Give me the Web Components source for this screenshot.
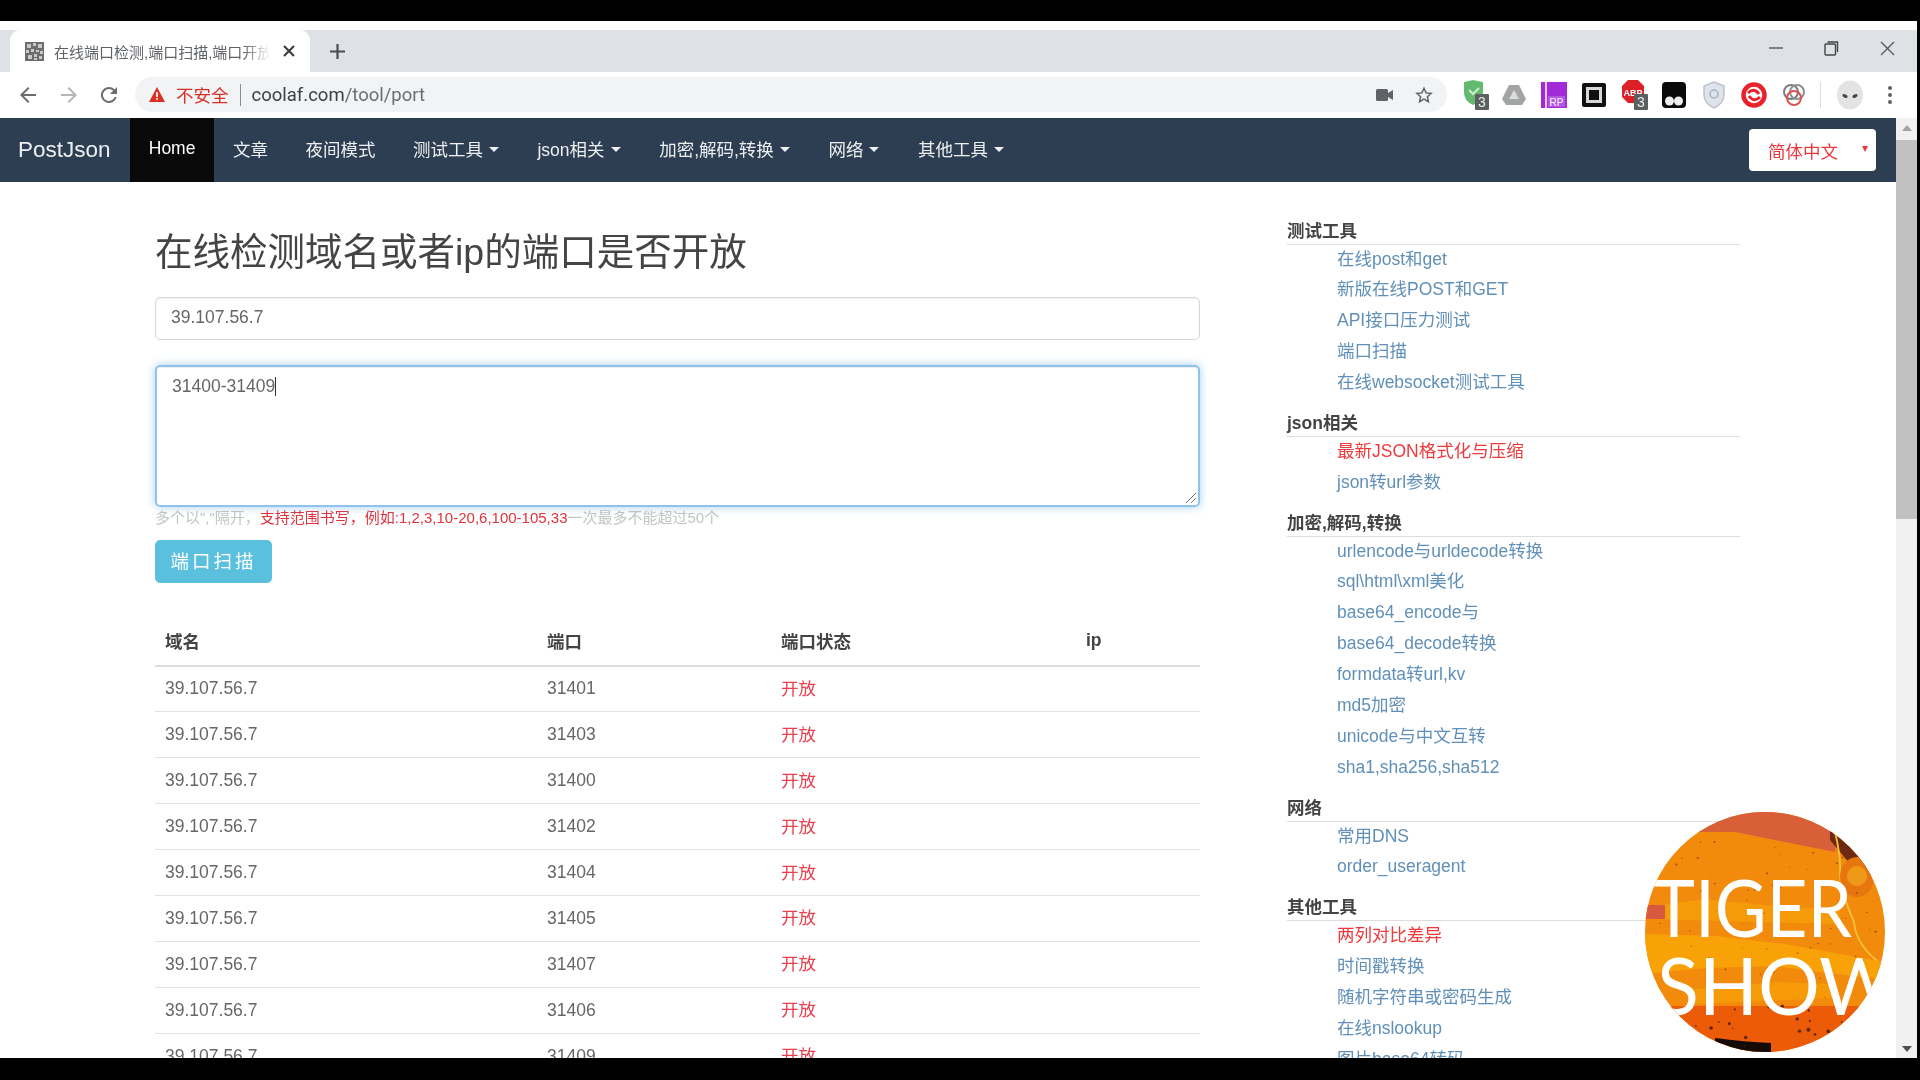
<!DOCTYPE html>
<html lang="zh-CN">
<head>
<meta charset="utf-8">
<title>在线端口检测,端口扫描,端口开放检测</title>
<style>
html, body { margin: 0; height: 100%; background: #000; overflow: hidden; }
</style>
</head>
<body>
<screen-frame>
    <browser-tabs slot="chrome" tab-title="在线端口检测,端口扫描,端口开放检测"></browser-tabs>
    <browser-toolbar slot="chrome" url-host="coolaf.com" url-path="/tool/port"></browser-toolbar>

    <site-navbar slot="nav">
        <nav-item active>Home</nav-item>
        <nav-item>文章</nav-item>
        <nav-item>夜间模式</nav-item>
        <nav-item caret>测试工具</nav-item>
        <nav-item caret>json相关</nav-item>
        <nav-item caret>加密,解码,转换</nav-item>
        <nav-item caret>网络</nav-item>
        <nav-item caret>其他工具</nav-item>
    </site-navbar>

    <port-form slot="main">
        <port-table>
            <port-row ip="39.107.56.7" port="31401"></port-row>
            <port-row ip="39.107.56.7" port="31403"></port-row>
            <port-row ip="39.107.56.7" port="31400"></port-row>
            <port-row ip="39.107.56.7" port="31402"></port-row>
            <port-row ip="39.107.56.7" port="31404"></port-row>
            <port-row ip="39.107.56.7" port="31405"></port-row>
            <port-row ip="39.107.56.7" port="31407"></port-row>
            <port-row ip="39.107.56.7" port="31406"></port-row>
            <port-row ip="39.107.56.7" port="31409"></port-row>
        </port-table>
    </port-form>

    <tool-sidebar slot="side">
        <tool-group heading="测试工具">
            <tool-link>在线post和get</tool-link>
            <tool-link>新版在线POST和GET</tool-link>
            <tool-link>API接口压力测试</tool-link>
            <tool-link>端口扫描</tool-link>
            <tool-link>在线websocket测试工具</tool-link>
        </tool-group>
        <tool-group heading="json相关">
            <tool-link hot>最新JSON格式化与压缩</tool-link>
            <tool-link>json转url参数</tool-link>
        </tool-group>
        <tool-group heading="加密,解码,转换">
            <tool-link>urlencode与urldecode转换</tool-link>
            <tool-link>sql\html\xml美化</tool-link>
            <tool-link>base64_encode与</tool-link>
            <tool-link>base64_decode转换</tool-link>
            <tool-link>formdata转url,kv</tool-link>
            <tool-link>md5加密</tool-link>
            <tool-link>unicode与中文互转</tool-link>
            <tool-link>sha1,sha256,sha512</tool-link>
        </tool-group>
        <tool-group heading="网络">
            <tool-link>常用DNS</tool-link>
            <tool-link>order_useragent</tool-link>
        </tool-group>
        <tool-group heading="其他工具">
            <tool-link hot>两列对比差异</tool-link>
            <tool-link>时间戳转换</tool-link>
            <tool-link>随机字符串或密码生成</tool-link>
            <tool-link>在线nslookup</tool-link>
            <tool-link>图片base64转码</tool-link>
        </tool-group>
    </tool-sidebar>

    <tiger-badge slot="overlay"></tiger-badge>
</screen-frame>

<script>
const FONT = `"Liberation Sans", "Noto Sans CJK SC", sans-serif`;

function mount(el, html) {
    const root = el.attachShadow({mode: 'open'});
    const tpl = document.createElement('template');
    tpl.innerHTML = html;
    root.appendChild(tpl.content.cloneNode(true));
    return root;
}

window.customElements.define('screen-frame',
    class extends HTMLElement {
        constructor() {
            super();
            mount(this, `
            <style>
            :host {
                display: block;
                width: 1920px;
                height: 1080px;
                background: #000;
                padding-top: 21px;
                box-sizing: border-box;
                position: relative;
                overflow: hidden;
                font-family: ${FONT};
                filter: blur(0.6px);
            }
            #window {
                width: 1917px;
                height: 1037px;
                background: #fff;
                display: flex;
                flex-direction: column;
                overflow: hidden;
            }
            #viewport { flex: 1; display: flex; min-height: 0; }
            #page { flex: 1; min-width: 0; display: flex; flex-direction: column; overflow: hidden; }
            #content { flex: 1; min-height: 0; display: flex; overflow: hidden; }
            </style>
            <div id="window">
                <slot name="chrome"></slot>
                <div id="viewport">
                    <div id="page">
                        <slot name="nav"></slot>
                        <div id="content">
                            <slot name="main"></slot>
                            <slot name="side"></slot>
                        </div>
                    </div>
                    <page-scrollbar></page-scrollbar>
                </div>
            </div>
            <slot name="overlay"></slot>`);
        }
    }
);

window.customElements.define('browser-tabs',
    class extends HTMLElement {
        constructor() {
            super();
            const title = this.getAttribute('tab-title');
            mount(this, `
            <style>
            :host {
                display: flex;
                height: 51px;
                box-sizing: border-box;
                padding-top: 9px;
                background: linear-gradient(#fff 9px, #dee1e6 9px);
                align-items: stretch;
            }
            #tab {
                margin-left: 10px;
                width: 300px;
                box-sizing: border-box;
                background: #fff;
                border-radius: 10px 10px 0 0;
                display: flex;
                align-items: center;
                padding-left: 15px;
            }
            #fav { width: 19px; height: 19px; flex: none; }
            #title {
                margin-left: 10px;
                width: 216px;
                flex: none;
                overflow: hidden;
                white-space: nowrap;
                font-size: 15px;
                color: #5f6368;
                -webkit-mask-image: linear-gradient(90deg, #000 88%, transparent);
            }
            #close { margin-left: 12px; width: 14px; height: 14px; flex: none; }
            #plus { margin-left: 19px; width: 17px; align-self: center; height: 17px; flex: none; }
            #controls { margin-left: auto; display: flex; align-items: center; padding-right: 22px; gap: 41px; padding-bottom: 6px; }
            svg { display: block; }
            </style>
            <div id="tab">
                <svg id="fav" viewBox="0 0 19 19">
                    <rect width="19" height="19" fill="#6d6d6d"/>
                    <path d="M2 2h4v4H2zM8 1h3v3H8zM13 2h4v4h-4zM1 8h3v3H1zM6 7h3v3H6zM11 8h3v2h-3zM15 9h3v3h-3zM3 13h4v4H3zM9 12h3v3H9zM14 14h3v3h-3zM9 16h3v2H9z" fill="#c9c9c9"/>
                </svg>
                <span id="title">${title}</span>
                <svg id="close" viewBox="0 0 14 14"><path d="M2 2l10 10M12 2L2 12" stroke="#3c4043" stroke-width="2.2"/></svg>
            </div>
            <svg id="plus" viewBox="0 0 17 17"><path d="M8.5 1v15M1 8.5h15" stroke="#4a4d51" stroke-width="2.2"/></svg>
            <div id="controls">
                <svg width="14" height="14" viewBox="0 0 14 14"><path d="M0 7h14" stroke="#555" stroke-width="1.4"/></svg>
                <svg width="15" height="15" viewBox="0 0 15 15" fill="none" stroke="#444" stroke-width="1.4"><rect x="1" y="3" width="10.5" height="11" rx="1"/><path d="M3.5 1h10v10"/></svg>
                <svg width="15" height="15" viewBox="0 0 15 15"><path d="M1 1l13 13M14 1L1 14" stroke="#555" stroke-width="1.3"/></svg>
            </div>`);
        }
    }
);

window.customElements.define('browser-toolbar',
    class extends HTMLElement {
        constructor() {
            super();
            const host = this.getAttribute('url-host');
            const path = this.getAttribute('url-path');
            mount(this, `
            <style>
            :host {
                display: flex;
                height: 46px;
                box-sizing: border-box;
                align-items: center;
                background: #fff;
                padding-left: 16px;
            }
            svg { display: block; flex: none; }
            #nav { display: flex; gap: 16.500px; align-items: center; }
            #bar {
                margin-left: 14px;
                width: 1312px;
                height: 35px;
                flex: none;
                margin-top: -1px;
                border-radius: 18px;
                background: #f1f3f4;
                display: flex;
                align-items: center;
                padding-left: 14px;
                box-sizing: border-box;
                font-size: 17.500px;
                white-space: nowrap;
            }
            #warn { color: #d93025; margin-left: 11px; }
            #sep { width: 1px; height: 22px; background: #8a8d91; margin: 0 11px; }
            #url { color: #3c4043; font-family: Roboto, ${FONT}; font-size: 18.500px; }
            #url span { color: #6a6e72; }
            #bar-end { margin-left: auto; display: flex; gap: 22px; padding-right: 14px; align-items: center; }
            #exts { display: flex; align-items: center; gap: 14px; margin-left: 16px; }
            #sepv { width: 1px; height: 26px; background: #dadce0; margin: 0 1px 0 -1px; }
            text { font-family: "Liberation Sans", sans-serif; }
            </style>
            <div id="nav">
                <svg width="24" height="24" viewBox="0 0 24 24"><path d="M20 11H7.8l5.6-5.6L12 4l-8 8 8 8 1.4-1.4L7.8 13H20z" fill="#6a6d70"/></svg>
                <svg width="24" height="24" viewBox="0 0 24 24"><path d="M4 11h12.2l-5.6-5.6L12 4l8 8-8 8-1.4-1.4 5.6-5.6H4z" fill="#b4b7ba"/></svg>
                <svg width="24" height="24" viewBox="0 0 24 24"><path d="M17.6 6.4A8 8 0 1 0 19.7 14h-2.1a6 6 0 1 1-1.4-6.2L13 11h7V4z" fill="#6a6d70"/></svg>
            </div>
            <div id="bar">
                <svg width="16" height="15" viewBox="0 0 16 15"><path d="M8 0l8 15H0z" fill="#d93025"/><path d="M7.2 5h1.6v5H7.200zM7.200 11h1.600v1.700H7.200z" fill="#fff"/></svg>
                <span id="warn">不安全</span>
                <span id="sep"></span>
                <span id="url">${host}<span>${path}</span></span>
                <div id="bar-end">
                    <svg width="17" height="12" viewBox="0 0 17 12"><rect width="12" height="12" rx="1.500" fill="#5f6368"/><path d="M12 4l5-3v10l-5-3z" fill="#5f6368"/></svg>
                    <svg width="18" height="18" viewBox="0 0 24 24"><path d="M12 3l2.800 6.200 6.700.700-5 4.500 1.400 6.600-5.900-3.400-5.900 3.400 1.400-6.600-5-4.500 6.700-.700z" fill="none" stroke="#5f6368" stroke-width="2"/></svg>
                </div>
            </div>
            <div id="exts">
                <svg width="26" height="32" viewBox="0 0 26 32" style="margin-right:-2px">
                    <path d="M1 3q9-2 9-2t10 2v10q0 9-10 13Q1 22 1 13z" fill="#63b96d"/>
                    <path d="M6 11l4 4 6-6" stroke="#cfeccf" stroke-width="2" fill="none"/>
                    <rect x="12" y="15" width="14" height="16" rx="1" fill="#5c5f60"/>
                    <text x="19" y="28" font-size="14" fill="#eee" text-anchor="middle">3</text>
                </svg>
                <svg width="26" height="24" viewBox="0 0 26 24"><path d="M8 2h10l7 14-4 6H5l-4-6z" fill="#a2a4a6"/><path d="M13 7l-5 9h10z" fill="#dcdcdc"/></svg>
                <svg width="26" height="26" viewBox="0 0 26 26">
                    <rect width="26" height="26" fill="#a32ad8"/>
                    <rect x="4" width="2" height="26" fill="#e9c8f7"/>
                    <rect x="7" y="14" width="17" height="11" fill="#b455e3"/>
                    <text x="15.500" y="23.500" font-size="10" fill="#fff" text-anchor="middle">RP</text>
                </svg>
                <svg width="26" height="26" viewBox="0 0 26 26"><rect x="1" y="1" width="24" height="24" rx="2" fill="#111"/><rect x="5" y="5" width="16" height="16" fill="#d8d8d8"/><rect x="8" y="8" width="10" height="10" fill="#111"/></svg>
                <svg width="28" height="32" viewBox="0 0 28 32" style="margin-right:-2px">
                    <path d="M7 1h10l6 6v11l-6 6H7l-6-6V7z" fill="#dd1f28"/>
                    <text x="12" y="16.500" font-size="9" font-weight="700" fill="#fff" text-anchor="middle">ABP</text>
                    <rect x="13" y="15" width="14" height="16" rx="1" fill="#5c5f60"/>
                    <text x="20" y="28" font-size="14" fill="#eee" text-anchor="middle">3</text>
                </svg>
                <svg width="26" height="26" viewBox="0 0 26 26"><rect x="1" width="24" height="26" rx="4" fill="#0a0a0a"/><circle cx="8.500" cy="19" r="4.500" fill="#eee"/><circle cx="17.500" cy="19" r="4.500" fill="#eee"/></svg>
                <svg width="26" height="28" viewBox="0 0 26 28"><path d="M13 1l10 4v9q0 8-10 13Q3 22 3 14V5z" fill="#dfe3ea" stroke="#bcc3cf" stroke-width="1.500"/><circle cx="13" cy="13" r="4" fill="none" stroke="#aab2c0" stroke-width="1.500"/></svg>
                <svg width="26" height="26" viewBox="0 0 26 26"><circle cx="13" cy="13" r="10.500" fill="#fff" stroke="#e8232b" stroke-width="4.500"/><path d="M7 11q6-6 11 1M19 15q-6 6-11-1" fill="none" stroke="#e8232b" stroke-width="3"/></svg>
                <svg width="26" height="26" viewBox="0 0 26 26" fill="none" stroke-width="2"><circle cx="10" cy="10" r="7" stroke="#7a7d80"/><circle cx="16" cy="10" r="7" stroke="#8d9092"/><circle cx="13" cy="16" r="7" stroke="#d9534f"/></svg>
                <span id="sepv"></span>
                <svg width="28" height="30" viewBox="0 0 28 30"><ellipse cx="14" cy="15" rx="13" ry="14.500" fill="#e3e3e3"/><ellipse cx="9" cy="16" rx="2.800" ry="1.600" transform="rotate(25 9 16)" fill="#444"/><ellipse cx="19" cy="16" rx="2.800" ry="1.600" transform="rotate(-25 19 16)" fill="#444"/></svg>
                <svg width="6" height="22" viewBox="0 0 6 22" style="margin-left:9px"><circle cx="3" cy="4" r="2" fill="#5f6368"/><circle cx="3" cy="11" r="2" fill="#5f6368"/><circle cx="3" cy="18" r="2" fill="#5f6368"/></svg>
            </div>`);
        }
    }
);

window.customElements.define('site-navbar',
    class extends HTMLElement {
        constructor() {
            super();
            mount(this, `
            <style>
            :host {
                display: flex;
                flex: none;
                height: 64px;
                background: #2d3d52;
                align-items: stretch;
            }
            #brand {
                width: 130px;
                box-sizing: border-box;
                padding-left: 18px;
                display: flex;
                align-items: center;
                font-size: 22.500px;
                color: #ecf0f1;
            }
            #lang {
                margin-left: auto;
                margin-right: 20px;
                align-self: center;
                width: 127px;
                height: 42px;
                box-sizing: border-box;
                background: #fff;
                border-radius: 4px;
                color: #e6393f;
                font-size: 17.500px;
                display: flex;
                align-items: center;
                padding-left: 19px;
            }
            #lang i {
                margin-left: 24px;
                margin-top: -2px;
                border-top: 6px solid #e6393f;
                border-left: 3.500px solid transparent;
                border-right: 3.500px solid transparent;
            }
            </style>
            <div id="brand">PostJson</div>
            <slot></slot>
            <div id="lang">简体中文<i></i></div>`);
        }
    }
);

window.customElements.define('nav-item',
    class extends HTMLElement {
        constructor() {
            super();
            mount(this, `
            <style>
            :host {
                display: flex;
                align-items: center;
                padding: 0 18.750px 3px;
                font-size: 17.500px;
                color: #ecf0f1;
                white-space: nowrap;
            }
            :host([caret]) { padding-right: 19.800px; }
            :host([active]) { background: #090909; color: #fff; }
            i {
                display: none;
                margin-left: 6px;
                margin-top: 2px;
                border-top: 5px solid #ecf0f1;
                border-left: 5px solid transparent;
                border-right: 5px solid transparent;
            }
            :host([caret]) i { display: block; }
            </style>
            <slot></slot><i></i>`);
        }
    }
);

window.customElements.define('port-form',
    class extends HTMLElement {
        constructor() {
            super();
            mount(this, `
            <style>
            :host {
                display: block;
                flex: none;
                box-sizing: border-box;
                width: 1287px;
                padding: 0 87px 0 155px;
                color: #333;
            }
            h1 {
                margin: 0;
                height: 115px;
                line-height: 140px;
                font-size: 37.500px;
                font-weight: 400;
                color: #444;
                white-space: nowrap;
            }
            .field {
                box-sizing: border-box;
                border: 1px solid #d8d8d8;
                border-radius: 5px;
                padding: 0 15px;
                color: #666;
                font-size: 17.500px;
                box-shadow: inset 0 1px 2px rgba(0,0,0,.08);
            }
            #ip { height: 43px; line-height: 38px; }
            #ports {
                position: relative;
                margin-top: 25px;
                height: 142px;
                line-height: 38px;
                border-color: #8fc3ec;
                border-width: 2px;
                box-shadow: inset 0 1px 1px rgba(0,0,0,.075), 0 0 8px rgba(102,175,233,.6);
            }
            #ports b { display: inline-block; width: 1px; height: 19px; background: #333; vertical-align: -4px; }
            #ports svg { position: absolute; right: 1px; bottom: 1px; }
            #help {
                height: 22px;
                line-height: 22px;
                font-size: 15px;
                color: #c4c4c4;
                white-space: nowrap;
            }
            #help span { color: #e1323c; }
            button {
                display: block;
                margin-top: 11px;
                width: 117px;
                height: 43px;
                border: 1px solid #5bc0de;
                border-radius: 5px;
                background: #5bc0de;
                color: #fff;
                font: inherit;
                font-size: 18.500px;
                letter-spacing: 3px;
                padding: 0 0 3px;
            }
            </style>
            <h1>在线检测域名或者ip的端口是否开放</h1>
            <div id="ip" class="field">39.107.56.7</div>
            <div id="ports" class="field">31400-31409<b></b>
                <svg width="14" height="14" viewBox="0 0 14 14"><path d="M13 3L3 13M13 8l-5 5" stroke="#777" stroke-width="1"/></svg>
            </div>
            <div id="help">多个以","隔开，<span>支持范围书写，例如:1,2,3,10-20,6,100-105,33</span>一次最多不能超过50个</div>
            <button>端口扫描</button>
            <slot></slot>`);
        }
    }
);

window.customElements.define('port-table',
    class extends HTMLElement {
        constructor() {
            super();
            mount(this, `
            <style>
            :host { display: block; margin-top: 35px; font-size: 17.500px; }
            #head {
                display: grid;
                grid-template-columns: 382px 234px 305px 1fr;
                height: 48.500px;
                align-items: center;
                border-bottom: 2px solid #ddd;
                box-sizing: border-box;
                font-weight: 700;
                color: #444;
            }
            #head span { padding-left: 10px; padding-bottom: 1px; }
            </style>
            <div id="head"><span>域名</span><span>端口</span><span>端口状态</span><span>ip</span></div>
            <slot></slot>`);
        }
    }
);

window.customElements.define('port-row',
    class extends HTMLElement {
        constructor() {
            super();
            const ip = this.getAttribute('ip');
            const port = this.getAttribute('port');
            mount(this, `
            <style>
            :host {
                display: grid;
                grid-template-columns: 382px 234px 305px 1fr;
                height: 45.900px;
                box-sizing: border-box;
                align-items: center;
                border-bottom: 1px solid #e2e2e2;
                color: #666;
            }
            span { padding-left: 10px; }
            .open { color: #e8404f; padding-bottom: 3px; }
            </style>
            <span>${ip}</span><span>${port}</span><span class="open">开放</span><span></span>`);
        }
    }
);

window.customElements.define('tool-sidebar',
    class extends HTMLElement {
        constructor() {
            super();
            mount(this, `
            <style>
            :host {
                display: flex;
                flex-direction: column;
                gap: 17.800px;
                width: 453px;
                flex: none;
                padding-top: 38.500px;
            }
            </style>
            <slot></slot>`);
        }
    }
);

window.customElements.define('tool-group',
    class extends HTMLElement {
        constructor() {
            super();
            mount(this, `
            <style>
            :host { display: block; }
            h4 {
                margin: 0;
                height: 24px;
                line-height: 20px;
                box-sizing: border-box;
                border-bottom: 1px solid #ddd;
                font-size: 17.500px;
                font-weight: 700;
                color: #444;
            }
            #items { display: flex; flex-direction: column; gap: 4.900px; padding: 1px 0 0 50px; }
            </style>
            <h4>${this.getAttribute('heading')}</h4>
            <div id="items"><slot></slot></div>`);
        }
    }
);

window.customElements.define('tool-link',
    class extends HTMLElement {
        constructor() {
            super();
            mount(this, `
            <style>
            :host {
                display: block;
                height: 26px;
                line-height: 26px;
                font-size: 17.500px;
                color: #6090b8;
                white-space: nowrap;
            }
            :host([hot]) { color: #ee3a3d; }
            </style>
            <slot></slot>`);
        }
    }
);

window.customElements.define('page-scrollbar',
    class extends HTMLElement {
        constructor() {
            super();
            mount(this, `
            <style>
            :host {
                display: flex;
                flex-direction: column;
                width: 21px;
                flex: none;
                background: #f1f1f1;
            }
            i {
                display: block;
                margin: 7px auto 0;
                border-bottom: 6px solid #a3a3a3;
                border-left: 5px solid transparent;
                border-right: 5px solid transparent;
                width: 0;
            }
            i.down { margin: auto auto 6px; border-bottom: 0; border-top: 6px solid #505050; }
            b { display: block; height: 379px; margin-top: 9px; background: #c1c1c1; }
            </style>
            <i></i><b></b><i class="down"></i>`);
        }
    }
);

window.customElements.define('tiger-badge',
    class extends HTMLElement {
        constructor() {
            super();
            // speckle of the painted texture, seeded so that every run looks the same
            let seed = 7, dots = '';
            const rnd = () => (seed = (seed * 16807) % 2147483647) / 2147483647;
            for (let i = 0; i < 110; i++) {
                const y = 30 + rnd() * 205;
                const r = (y > 190 ? 1.400 : .700) * (.5 + rnd());
                dots += `<circle cx="${(rnd() * 240).toFixed(1)}" cy="${y.toFixed(1)}" r="${r.toFixed(2)}" fill="#5a2408" opacity="${y > 190 ? .95 : .55}"/>`;
            }
            mount(this, `
            <style>
            :host { position: absolute; left: 1645px; top: 812px; width: 240px; height: 240px; display: block; }
            svg { display: block; }
            text { font-family: Lato, "Open Sans", sans-serif; font-weight: 400; font-size: 79px; fill: #fff; }
            </style>
            <svg width="240" height="240" viewBox="0 0 240 240">
                <defs><clipPath id="disc"><circle cx="120" cy="120" r="120"/></clipPath></defs>
                <g clip-path="url(#disc)">
                    <rect width="240" height="240" fill="#f28a0c"/>
                    <path d="M50 20l40 0 30 6 70 14 4-40H50z" fill="#d95f38"/>
                    <path d="M185 18l55 20v30l-30-10-25-30z" fill="#6e2a10"/>
                    <path d="M190 20q6 25 5 40t14 50q2 25 31 45" fill="none" stroke="#f4c23a" stroke-width="1.800"/>
                    <ellipse cx="212" cy="65" rx="17" ry="20" fill="#e8760f"/>
                    <ellipse cx="212" cy="64" rx="10" ry="10" fill="#ee9a18"/>
                    <path d="M0 95l60-8 60 6 75 5 0 14-80-2-115-3z" fill="#f59a08"/>
                    <path d="M0 122l70 2 70 8 100 18 0 18-110-14-70 2-60 6z" fill="#f8a208"/>
                    <path d="M40 178l90-8 60 2 0 14-140 6z" fill="#f69a08"/>
                    <path d="M0 93h20v14H0z" fill="#d9593e"/>
                    <path d="M0 194h240v46H0z" fill="#ec5b08"/>
                    <path d="M70 226q30 4 56 5l0 9H70z" fill="#140b06"/>
                    ${dots}
                    <text x="8" y="125" textLength="199" lengthAdjust="spacingAndGlyphs">TIGER</text>
                    <text x="12" y="203" textLength="242" lengthAdjust="spacingAndGlyphs">SHOW</text>
                </g>
            </svg>`);
        }
    }
);
</script>
</body>
</html>
